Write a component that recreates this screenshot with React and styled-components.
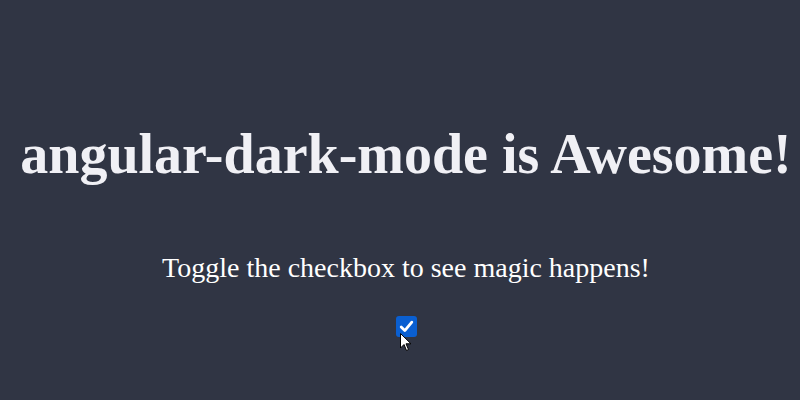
import React, { useState } from "react";
import styled, { createGlobalStyle } from "styled-components";

const GlobalStyle = createGlobalStyle`
    html, body {
        margin: 0;
        padding: 0;
        background: #303544;
    }
    body {
        font-family: "Liberation Serif", "Times New Roman", serif;
        color: #f0f0f5;
    }
`;

const Page = styled.main`
    width: 800px;
    height: 400px;
    display: flex;
    flex-direction: column;
    align-items: center;
    padding: 122px 0 0 12px;
    box-sizing: border-box;
`;

const Title = styled.h1`
    margin: 0;
    font-size: 56px;
    font-weight: 700;
    line-height: 64px;
    text-align: center;
    white-space: nowrap;
`;

const Lead = styled.p`
    margin: 66px 0 0;
    font-size: 28px;
    line-height: 32px;
    color: #ffffff;
`;

const CheckWrap = styled.label`
    position: relative;
    margin-top: 32px;
    width: 21px;
    height: 21px;
    cursor: pointer;
`;

const HiddenInput = styled.input`
    position: absolute;
    opacity: 0;
    margin: 0;
    width: 21px;
    height: 21px;
`;

const Box = styled.span`
    display: flex;
    align-items: center;
    justify-content: center;
    width: 21px;
    height: 21px;
    border-radius: 3px;
    background: ${(p) => (p.checked ? "#0a5fd1" : "#ffffff")};
    border: ${(p) => (p.checked ? "none" : "1px solid #767676")};
    box-sizing: border-box;
`;

const Pointer = styled.svg`
    position: absolute;
    left: 4px;
    top: 17px;
    pointer-events: none;
`;

export default function App() {
    const [checked, setChecked] = useState(true);

    return (
        <>
            <GlobalStyle />
            <Page>
                <Title>angular-dark-mode is Awesome!</Title>
                <Lead>Toggle the checkbox to see magic happens!</Lead>
                <CheckWrap>
                    <HiddenInput
                        type="checkbox"
                        checked={checked}
                        onChange={() => setChecked(!checked)}
                    />
                    <Box checked={checked}>
                        {checked && (
                            <svg width="15" height="13" viewBox="0 0 15 13">
                                <path
                                    d="M2.2 7 L5.8 10.6 L12.8 2.2"
                                    fill="none"
                                    stroke="#fff"
                                    strokeWidth="2.8"
                                    strokeLinecap="round"
                                    strokeLinejoin="round"
                                />
                            </svg>
                        )}
                    </Box>
                    <Pointer width="12" height="20" viewBox="0 0 12 20">
                        <path
                            d="M0.5 0.5 L0.5 15 L4 11.5 L6.5 17.5 L8.5 16.5 L6 10.8 L11 10.8 Z"
                            fill="#fff"
                            stroke="#000"
                            strokeWidth="1"
                            strokeLinejoin="round"
                        />
                    </Pointer>
                </CheckWrap>
            </Page>
        </>
    );
}
